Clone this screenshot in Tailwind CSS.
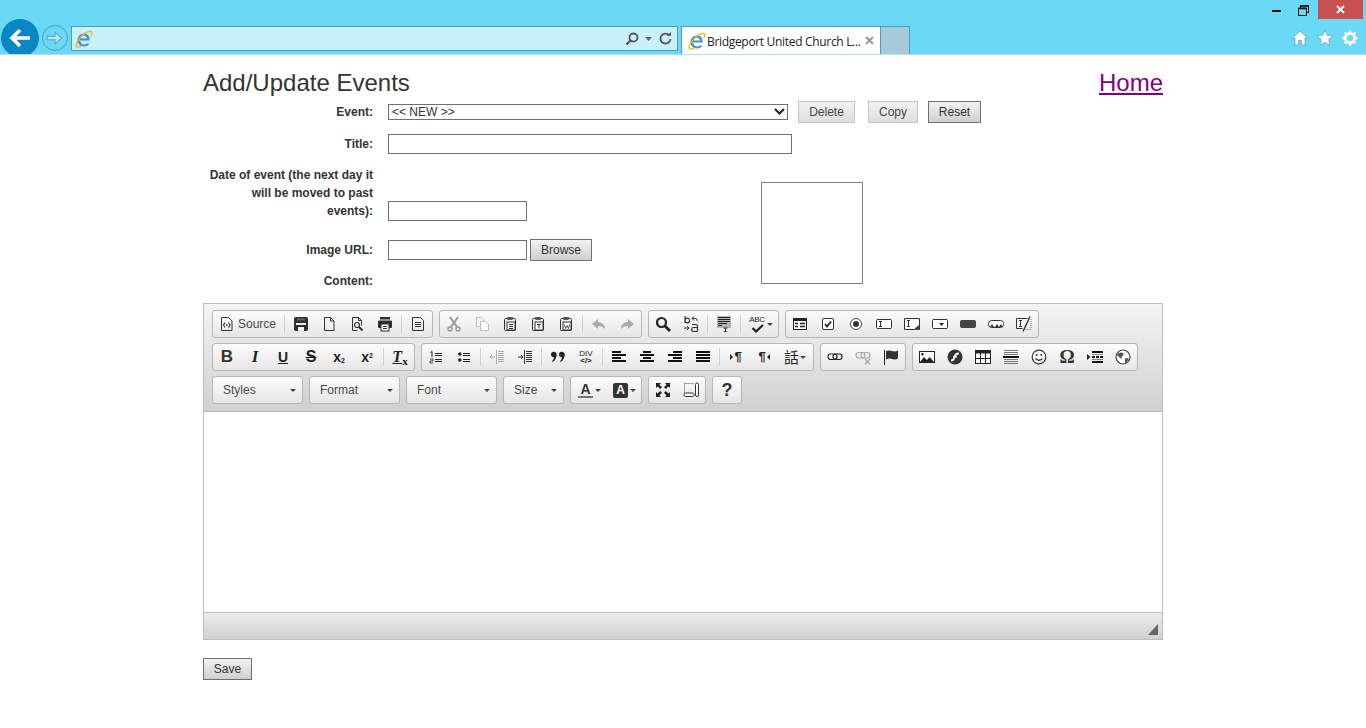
<!DOCTYPE html>
<html lang="en">
<head>
    <meta charset="UTF-8">
    <title>Add/Update Events</title>
    <script src="https://cdn.jsdelivr.net/npm/@tailwindcss/browser@4"></script>
</head>
<body class="bg-white font-['Liberation_Sans',Arial,sans-serif] text-[#333] overflow-hidden">

<!-- toolbar icons -->
<svg class="hidden" xmlns="http://www.w3.org/2000/svg">
    <symbol id="ie" viewBox="0 0 18 18">
        <path d="M3.500 10.500h11c.5-4-1.500-7-5.500-7s-6.500 3-6.500 6.500 2.500 6.500 6.500 6.500c2.500 0 4.500-1 5.500-3h-3c-.6.8-1.500 1-2.500 1-2 0-3.300-1.500-3.500-3zM6 8.500c.3-1.700 1.400-2.700 3-2.700s2.700 1 3 2.700z" fill="#3d8fd8" fill-rule="evenodd"/>
        <path d="M1.500 16.500C-.5 13 8 3 14 1.500c3.500-.8 3.500 2 2 4.500M1.500 16.500c1 1 3 .7 5-.5" fill="none" stroke="#f2b515" stroke-width="1.300"/>
    </symbol>
    <symbol id="page" viewBox="0 0 16 16"><path d="M3.500 1.500h6l3.500 3.500v9.500H3.500zM9.500 1.500V5H13" fill="none" stroke="#333"/></symbol>
    <symbol id="source" viewBox="0 0 16 16"><path d="M2.500 1.500h7l3.500 3.500v9.500H2.500z" fill="none" stroke="#333"/><path d="M6 6.500L4.500 9 6 11.500M9.500 6.500L11 9l-1.500 2.500" fill="none" stroke="#333" stroke-width="1.100"/><rect x="7" y="8.300" width="1.500" height="1.500" fill="#333"/></symbol>
    <symbol id="save" viewBox="0 0 16 16"><path d="M1 3a2 2 0 0 1 2-2h10a2 2 0 0 1 2 2v10a2 2 0 0 1-2 2H3a2 2 0 0 1-2-2z" fill="#2e2e2e"/><rect x="3" y="7" width="10" height="2" fill="#eee"/><rect x="4" y="2.500" width="8" height="2" fill="#666"/><rect x="5" y="11" width="6" height="4" fill="#eee"/></symbol>
    <symbol id="preview" viewBox="0 0 16 16"><path d="M3.500 14.500v-13h6l3 3v5M3.500 14.500h5M9.500 1.500v3h3" fill="none" stroke="#333"/><circle cx="8" cy="9" r="2.500" fill="none" stroke="#333" stroke-width="1.200"/><path d="M10 11l3.500 3.500" stroke="#333" stroke-width="2"/></symbol>
    <symbol id="print" viewBox="0 0 16 16"><rect x="3" y="1" width="10" height="2.500" fill="#2e2e2e"/><rect x="1" y="4.500" width="14" height="7.500" rx="1" fill="#2e2e2e"/><rect x="4" y="8" width="8" height="7" fill="#fff" stroke="#2e2e2e"/><path d="M6 10.500h4M6 12.500h4" stroke="#2e2e2e"/></symbol>
    <symbol id="templates" viewBox="0 0 16 16"><path d="M2.500 1.500h8l3 3v10h-11z" fill="none" stroke="#333"/><path d="M5 6.500h6M5 8.500h6M5 10.500h6" stroke="#333"/></symbol>
    <symbol id="cut" viewBox="0 0 16 16"><circle cx="4" cy="13" r="2" fill="none" stroke="#999" stroke-width="1.500"/><circle cx="12" cy="13" r="2" fill="none" stroke="#999" stroke-width="1.500"/><path d="M5 11L12 1M11 11L4 1" stroke="#999" stroke-width="2"/></symbol>
    <symbol id="copy" viewBox="0 0 16 16"><path d="M2.500 1.500h5l2 2v2M2.500 1.500v9h3M6.500 5.500h5l3 3v6h-8z" fill="#fff" stroke="#bbb"/></symbol>
    <symbol id="paste" viewBox="0 0 16 16"><path d="M5 2.500H3.500q-1 0-1 1v10q0 1 1 1h9q1 0 1-1v-10q0-1-1-1H11" fill="none" stroke="#333"/><rect x="5" y="1" width="6" height="3" rx="1" fill="#555"/><rect x="5" y="6" width="8" height="8" fill="#fff" stroke="#333"/><path d="M7 8.500h4M7 10.500h4M7 12.500h4" stroke="#333"/></symbol>
    <symbol id="pastet" viewBox="0 0 16 16"><path d="M5 2.500H3.500q-1 0-1 1v10q0 1 1 1h9q1 0 1-1v-10q0-1-1-1H11" fill="none" stroke="#333"/><rect x="5" y="1" width="6" height="3" rx="1" fill="#555"/><rect x="5" y="6" width="8" height="8" fill="#fff" stroke="#333"/><path d="M7 8.500h4M9 8.500v4" stroke="#333"/></symbol>
    <symbol id="pastew" viewBox="0 0 16 16"><path d="M5 2.500H3.500q-1 0-1 1v10q0 1 1 1h9q1 0 1-1v-10q0-1-1-1H11" fill="none" stroke="#333"/><rect x="5" y="1" width="6" height="3" rx="1" fill="#555"/><rect x="5" y="6" width="8" height="8" fill="#fff" stroke="#333"/><path d="M6.500 8.500l1 4 1.500-3 1.500 3 1-4" fill="none" stroke="#333" stroke-width=".8"/></symbol>
    <symbol id="undo" viewBox="0 0 16 16"><path d="M7 3L1 8l6 5v-3c3 0 5 1 7 3 0-4-3-7-7-7z" fill="#aaa"/></symbol>
    <symbol id="redo" viewBox="0 0 16 16"><path d="M9 3l6 5-6 5v-3c-3 0-5 1-7 3 0-4 3-7 7-7z" fill="#aaa"/></symbol>
    <symbol id="find" viewBox="0 0 16 16"><circle cx="6.500" cy="6.500" r="4.500" fill="none" stroke="#222" stroke-width="2.200"/><path d="M10 10l5 5" stroke="#222" stroke-width="3"/></symbol>
    <symbol id="replace" viewBox="0 0 16 16"><path d="M2 0v7M2 4.500a2.300 2.300 0 1 0 4.600 0 2.300 2.300 0 1 0-4.600 0" fill="none" stroke="#333" stroke-width="1.200"/><path d="M9 2.500h3.500q1.500 0 1.500 1.500v1M9 2.500l2-2M9 2.500l2 2M1 12h5M6 12l-2-2M6 12l-2 2" fill="none" stroke="#333"/><path d="M9 8.500h4q1.500 0 1.500 1.500v5.500M14.500 11.500H10.500q-1.800 0-1.800 2t1.800 2h4" fill="none" stroke="#333" stroke-width="1.200"/></symbol>
    <symbol id="selectall" viewBox="0 0 16 16"><rect x="1" y="0" width="14" height="12" fill="#b5b5b5"/><path d="M2 1.500h12M2 3.500h12M2 5.500h12M2 7.500h9M2 9.500h4" stroke="#222"/><path d="M7.500 12h4M9.500 12v4M7.500 16h4" stroke="#222"/></symbol>
    <symbol id="form" viewBox="0 0 16 16"><rect x="1.500" y="2.500" width="13" height="11" fill="#fff" stroke="#222"/><rect x="1" y="2" width="14" height="3" fill="#222"/><path d="M3 7.500h3M3 10.500h3M8 7.500h5M8 10.500h5" stroke="#222" stroke-width="1.500"/></symbol>
    <symbol id="checkbox" viewBox="0 0 16 16"><rect x="2.500" y="2.500" width="11" height="11" rx="1.500" fill="#fff" stroke="#333"/><path d="M5 8l2 2.500L11 5.500" fill="none" stroke="#222" stroke-width="1.800"/></symbol>
    <symbol id="radio" viewBox="0 0 16 16"><circle cx="8" cy="8" r="5.500" fill="#fff" stroke="#444"/><circle cx="8" cy="8" r="3" fill="#333"/></symbol>
    <symbol id="textfield" viewBox="0 0 16 16"><rect x=".5" y="3.500" width="15" height="9" rx="1" fill="#fff" stroke="#333"/><path d="M3 5.500h3M4.500 5.500v5M3 10.500h3" stroke="#333"/></symbol>
    <symbol id="textarea" viewBox="0 0 16 16"><path d="M.5 2.500h15v11H.5z" fill="#fff" stroke="#333"/><path d="M3 4.500h3M4.500 4.500v6M3 10.500h3" stroke="#333"/><path d="M15 9l-6 5h6z" fill="#444"/></symbol>
    <symbol id="selectbox" viewBox="0 0 16 16"><rect x=".5" y="3.500" width="15" height="9" rx="1" fill="#fff" stroke="#333"/><path d="M7 7h5l-2.500 3z" fill="#222"/></symbol>
    <symbol id="button" viewBox="0 0 16 16"><rect x="0" y="4" width="16" height="8" rx="2" fill="#444"/></symbol>
    <symbol id="imagebutton" viewBox="0 0 16 16"><rect x=".5" y="4.500" width="15" height="7" rx="3" fill="#fff" stroke="#333"/><path d="M2 11l2-3 2 3zM7 11l2-3 2 3zM11 11l2-3 1.500 3z" fill="#333"/></symbol>
    <symbol id="hidden" viewBox="0 0 16 16"><path d="M.5 2.500h11M.5 2.500v10h6" fill="none" stroke="#333"/><path d="M3 4.500h3M4.500 4.500v6M3 10.500h3" stroke="#333"/><path d="M7 15.500L14 .5" stroke="#333" stroke-width="1.400"/><path d="M15 3v10.500H9" fill="none" stroke="#777" stroke-dasharray="1 1"/></symbol>
    <symbol id="ol" viewBox="0 0 16 16"><path d="M7 4.500h7M7 6.500h7M7 10.500h7M7 12.500h7" stroke="#222"/><path d="M2.500 3.500l1.500-1V8" fill="none" stroke="#222"/><path d="M2 10h3v2H2v2h3" fill="none" stroke="#222" stroke-width=".8"/></symbol>
    <symbol id="ul" viewBox="0 0 16 16"><circle cx="3.800" cy="5" r="1.800" fill="#222"/><circle cx="3.800" cy="11" r="1.800" fill="#222"/><path d="M7 4.500h7M7 6.500h7M7 10.500h7M7 12.500h7" stroke="#222"/></symbol>
    <symbol id="outdent" viewBox="0 0 16 16"><path d="M9 2.500h6M9 4.500h6M9 6.500h6M9 8.500h6M9 10.500h6M9 12.500h6M7.500 1v14" stroke="#aaa"/><path d="M6 8H1M3 6L1 8l2 2" fill="none" stroke="#aaa"/></symbol>
    <symbol id="indent" viewBox="0 0 16 16"><path d="M9 2.500h6M9 4.500h6M9 6.500h6M9 8.500h6M9 10.500h6M9 12.500h6M7.500 1v14" stroke="#333"/><path d="M1 8h5M4 6l2 2-2 2" fill="none" stroke="#333"/></symbol>
    <symbol id="quote" viewBox="0 0 16 16"><circle cx="3.800" cy="5.500" r="2.800" fill="#222"/><path d="M6.600 5.500C6.600 9 5 11.500 2.500 13l-.5-1C3.200 11 4 9.500 4 8z" fill="#222"/><circle cx="11.800" cy="5.500" r="2.800" fill="#222"/><path d="M14.600 5.500c0 3.500-1.600 6-4.100 7.500l-.5-1c1.200-1 2-2.500 2-4z" fill="#222"/></symbol>
    <symbol id="left" viewBox="0 0 16 16"><path d="M1 3h9M1 6h14M1 9h9M1 12h14" stroke="#111" stroke-width="2"/></symbol>
    <symbol id="center" viewBox="0 0 16 16"><path d="M4 3h8M1 6h14M4 9h8M1 12h14" stroke="#111" stroke-width="2"/></symbol>
    <symbol id="right" viewBox="0 0 16 16"><path d="M6 3h9M1 6h14M6 9h9M1 12h14" stroke="#111" stroke-width="2"/></symbol>
    <symbol id="justify" viewBox="0 0 16 16"><path d="M1 3h14M1 6h14M1 9h14M1 12h14" stroke="#111" stroke-width="2"/></symbol>
    <symbol id="link" viewBox="0 0 16 16"><rect x="1" y="5" width="9" height="5.500" rx="2.700" fill="none" stroke="#222" stroke-width="1.200"/><rect x="6" y="5" width="9" height="5.500" rx="2.700" fill="none" stroke="#222" stroke-width="1.200"/></symbol>
    <symbol id="unlink" viewBox="0 0 16 16"><rect x="1" y="3.500" width="9" height="5.500" rx="2.700" fill="none" stroke="#aaa" stroke-width="1.200"/><rect x="6" y="3.500" width="9" height="5.500" rx="2.700" fill="none" stroke="#aaa" stroke-width="1.200"/><path d="M10 10l5 5M15 10l-5 5" stroke="#aaa" stroke-width="1.500"/></symbol>
    <symbol id="flag" viewBox="0 0 16 16"><path d="M1.500 1v15" stroke="#222"/><path d="M3 2q3-1 6 0t6-.5v8q-3 1.500-6 .5t-6 .5z" fill="#333"/></symbol>
    <symbol id="image" viewBox="0 0 16 16"><rect x=".5" y="2.500" width="15" height="11" fill="#fff" stroke="#222"/><path d="M1 13l4-5 3 3 2.500-3 4.500 5z" fill="#222"/><circle cx="3.500" cy="5.200" r="1.200" fill="#222"/></symbol>
    <symbol id="flash" viewBox="0 0 16 16"><circle cx="8" cy="8" r="7.500" fill="#333"/><path d="M12 4.500c-3 0-4 1-4.500 3.500S6 11.500 4 11.500" fill="none" stroke="#fff" stroke-width="1.800"/><path d="M6 7.800h4" stroke="#fff" stroke-width="1.500"/></symbol>
    <symbol id="table" viewBox="0 0 16 16"><rect x=".5" y="1.500" width="15" height="13" fill="#fff" stroke="#222"/><rect x="0" y="1" width="16" height="3.500" fill="#222"/><path d="M0 9.500h16M5.500 4v11M10.500 4v11" stroke="#222"/></symbol>
    <symbol id="hr" viewBox="0 0 16 16"><path d="M1 1.500h14M1 3.500h14M1 5.500h14M1 10.500h14M1 12.500h14M1 14.500h14" stroke="#777"/><path d="M0 8h16" stroke="#111" stroke-width="2"/></symbol>
    <symbol id="smiley" viewBox="0 0 16 16"><circle cx="8" cy="8" r="6.800" fill="#fff" stroke="#333" stroke-width="1.200"/><circle cx="5.700" cy="6" r="1" fill="#333"/><circle cx="10.300" cy="6" r="1" fill="#333"/><path d="M4.500 9.500q3.500 3.500 7 0" fill="none" stroke="#333" stroke-width="1.200"/></symbol>
    <symbol id="pagebreak" viewBox="0 0 16 16"><path d="M0 5l3.500 3L0 11z" fill="#222"/><path d="M5 3h11M5 13h11" stroke="#111" stroke-width="2"/><path d="M5 8h11" stroke="#111" stroke-width="2" stroke-dasharray="3 1"/><path d="M5 5.500h11M5 10.500h11" stroke="#888"/></symbol>
    <symbol id="iframe" viewBox="0 0 16 16"><circle cx="8" cy="8" r="7" fill="#fff" stroke="#444" stroke-width="1.200"/><path d="M3.500 4q3-1 4.500 0t-.5 3-1 3-2.500-2-1-3zM10 9.500q3-1 3.500 0t-2 3.500-1.500-1.500z" fill="#555"/></symbol>
    <symbol id="maximize" viewBox="0 0 16 16"><path d="M1 1h5L4.500 2.700 7 5.200 5.200 7 2.700 4.500 1 6zM15 1v5l-1.700-1.500L10.800 7 9 5.200l2.500-2.500L10 1zM1 15v-5l1.700 1.500L5.200 9 7 10.800l-2.500 2.500L6 15zM15 15h-5l1.500-1.700L9 10.800 10.800 9l2.500 2.500L15 10z" fill="#222"/></symbol>
    <symbol id="blocks" viewBox="0 0 16 16"><path d="M1.500 1.500h9M1.500 1.500v9" stroke="#555" stroke-dasharray="1 1" fill="none"/><rect x="1" y="11" width="10" height="3.500" rx="1.500" fill="#fff" stroke="#333"/><rect x="12.500" y="1" width="3" height="13.500" rx="1.500" fill="#fff" stroke="#333"/></symbol>
</svg>

<!-- barra del navegador -->
<header class="h-[55px] overflow-hidden bg-[#6bd8f6] border-b border-[#b6dfeb] flex flex-col">
    <div class="h-[20px] flex justify-end items-start pr-[3px]">
        <span class="w-[9px] h-[2px] mt-[10px] bg-[#111]"></span>
        <svg class="w-[11px] h-[11px] mt-[5px] ml-[17px]" viewBox="0 0 11 11"><path d="M2.500 2.500V.5h8v7h-2M.5 3h8v7.500h-8z" fill="none" stroke="#111"/><path d="M.5 3.500h8M2.500 1h8" stroke="#111" stroke-width="1.500"/></svg>
        <span class="w-[45px] h-[19px] ml-[9px] bg-[#c75050] flex items-center justify-center">
            <svg class="w-[9px] h-[9px]" viewBox="0 0 9 9"><path d="M1 1l7 7M8 1L1 8" stroke="#fff" stroke-width="1.800"/></svg>
        </span>
    </div>
    <div class="h-[35px] flex items-start">
        <span class="w-[38px] h-[38px] shrink-0 ml-[1px] rounded-full bg-[#0a85c5] flex items-center justify-center">
            <svg class="w-[24px] h-[24px]" viewBox="0 0 24 24"><path d="M22 12H5M12 4l-8 8 8 8" fill="none" stroke="#fff" stroke-width="3.600"/></svg>
        </span>
        <span class="w-[26px] h-[26px] shrink-0 mt-[6px] ml-[3px] rounded-full border border-[#48a3bf] flex items-center justify-center">
            <svg class="w-[18px] h-[18px]" viewBox="0 0 16 16"><path d="M1 6.500h7V3l6 5-6 5V9.500H1z" fill="#b4e8f6" stroke="#62a9bd"/></svg>
        </span>
        <div class="w-[607px] h-[25px] shrink-0 mt-[7px] ml-[3px] bg-[#c9f1fb] border border-[#4a9fb8] flex items-center pl-[3px]">
            <svg class="w-[18px] h-[18px]"><use href="#ie"/></svg>
            <svg class="w-[14px] h-[14px] ml-auto" viewBox="0 0 14 14"><circle cx="8.500" cy="5.500" r="4" fill="none" stroke="#555" stroke-width="1.800"/><path d="M5.500 8.500L1.500 12.500" stroke="#555" stroke-width="2.200"/></svg>
            <svg class="w-[7px] h-[4px] ml-[6px]" viewBox="0 0 7 4"><path d="M0 0h7L3.500 4z" fill="#666"/></svg>
            <svg class="w-[13px] h-[13px] ml-[7px] mr-[5px]" viewBox="0 0 13 13"><path d="M10.500 3.500A5 5 0 1 0 11.500 7" fill="none" stroke="#555" stroke-width="1.800"/><path d="M7.500 3.800h4.500V0z" fill="#555"/></svg>
        </div>
        <div class="w-[200px] h-[28px] shrink-0 mt-[7px] ml-[3px] bg-white border border-b-0 border-[#4a9fb8] flex items-center pl-[6px] text-[12px] text-[#222] font-['Open_Sans',sans-serif]">
            <svg class="w-[18px] h-[18px] shrink-0"><use href="#ie"/></svg>
            <span class="ml-[1px] pt-[2px] tracking-[-0.32px] whitespace-nowrap">Bridgeport United Church L...</span>
            <svg class="w-[9px] h-[9px] ml-auto mr-[6px] shrink-0" viewBox="0 0 9 9"><path d="M1 1l7 7M8 1L1 8" stroke="#999" stroke-width="2"/></svg>
        </div>
        <span class="w-[29px] h-[28px] shrink-0 mt-[7px] bg-[#a5cbd9] border border-l-0 border-b-0 border-[#4a9fb8]"></span>
        <div class="ml-auto mr-[8px] mt-[11px] flex items-center gap-[9px]">
            <svg class="w-[16px] h-[16px]" viewBox="0 0 16 16"><path d="M8 1L.5 8H3v7h3.500v-4.500h3V15H13V8h2.500z" fill="#fff" stroke="#4e8fa5" stroke-width=".6"/></svg>
            <svg class="w-[16px] h-[16px]" viewBox="0 0 16 16"><path d="M8 .5l2.300 5 5.200.6-3.900 3.500 1.100 5.400L8 12.300 3.300 15l1.100-5.400L.5 6.100l5.200-.6z" fill="#fff" stroke="#4e8fa5" stroke-width=".5"/></svg>
            <svg class="w-[16px] h-[16px]" viewBox="0 0 16 16"><circle cx="8" cy="8" r="4.600" fill="none" stroke="#fff" stroke-width="2.600"/><path d="M8 .5v3M8 12.500v3M.5 8h3M12.500 8h3M2.700 2.700l2 2M11.300 11.300l2 2M13.300 2.700l-2 2M4.700 11.300l-2 2" stroke="#fff" stroke-width="2.400"/></svg>
        </div>
    </div>
</header>

<main class="w-[960px] ml-[203px]">
    <div class="mt-[14px] h-[28px] flex justify-between items-center text-[24px] leading-[28px]">
        <h1>Add/Update Events</h1>
        <a href="#" class="text-[#800080] underline">Home</a>
    </div>

    <!-- Event -->
    <div class="mt-[4px] h-[22px] flex items-center text-[12px]">
        <label class="w-[170px] text-right font-bold">Event:</label>
        <div class="relative ml-[15px] mb-[1px] w-[400px] h-[16px]">
            <select class="block appearance-none w-full h-full border border-[#707070] bg-white pl-[3px] text-[12px] leading-[14px] text-[#333] rounded-none">
                <option>&lt;&lt; NEW &gt;&gt;</option>
            </select>
            <svg class="absolute right-[2px] top-[3px] w-[13px] h-[10px] pointer-events-none" viewBox="0 0 13 10"><path d="M2 2l4.500 4.500L11 2" fill="none" stroke="#222" stroke-width="2"/></svg>
        </div>
        <button class="ml-[10px] w-[57px] h-[22px] border border-[#c4c4c4] bg-linear-to-b from-[#f2f2f2] to-[#dedede] text-[12px] text-[#444]">Delete</button>
        <button class="ml-[13px] w-[50px] h-[22px] border border-[#c4c4c4] bg-linear-to-b from-[#f2f2f2] to-[#dedede] text-[12px] text-[#444]">Copy</button>
        <button class="ml-[10px] w-[53px] h-[22px] border border-[#707070] bg-linear-to-b from-[#f2f2f2] to-[#cfcfcf] text-[12px] text-[#333]">Reset</button>
    </div>

    <!-- Title -->
    <div class="mt-[11px] h-[20px] flex items-center text-[12px]">
        <label class="w-[170px] text-right font-bold">Title:</label>
        <input type="text" class="ml-[15px] w-[404px] h-[20px] border border-[#707070] bg-white">
    </div>

    <div class="mt-[11px] flex">
        <div class="w-[558px] text-[12px]">
            <div class="h-[56px] flex items-end">
                <label class="w-[170px] mb-[1px] text-right font-bold leading-[18px]">Date of event (the next day it will be moved to past events):</label>
                <input type="text" class="ml-[15px] w-[139px] h-[20px] border border-[#707070] bg-white">
            </div>
            <div class="mt-[18px] h-[22px] flex items-center">
                <label class="w-[170px] text-right font-bold">Image URL:</label>
                <input type="text" class="ml-[15px] w-[139px] h-[20px] border border-[#707070] bg-white">
                <button class="ml-[3px] w-[62px] h-[22px] border border-[#707070] bg-linear-to-b from-[#f2f2f2] to-[#cfcfcf] text-[12px] text-[#333]">Browse</button>
            </div>
            <div class="mt-[11px] h-[18px] flex items-center">
                <label class="w-[170px] text-right font-bold">Content:</label>
            </div>
        </div>
        <div class="mt-[17px] w-[102px] h-[102px] border border-[#808080]"></div>
    </div>

    <!-- editor -->
    <div class="mt-[13px] h-[337px] border border-[#bdbdbd] flex flex-col text-[12px] text-[#484848]">
        <div class="h-[108px] shrink-0 pl-[8px] pt-[6px] border-b border-[#b6b6b6] bg-linear-to-b from-[#f4f4f4] to-[#cfd1cf] flex flex-col gap-[5px]">
            <div class="flex gap-[6px]">
                <div class="flex items-center h-[28px] border border-[#b6b6b6] rounded-[3px] bg-linear-to-b from-[#fcfcfc] to-[#e6e6e6]">
                    <span class="w-[69px] flex items-center pl-[6px]"><svg class="w-4 h-4"><use href="#source"/></svg><span class="ml-[3px]">Source</span></span>
                    <span class="w-px h-[18px] mx-[2px] bg-[#d0d0d0]"></span>
                    <span class="w-[28px] flex justify-center"><svg class="w-4 h-4"><use href="#save"/></svg></span>
                    <span class="w-[28px] flex justify-center"><svg class="w-4 h-4"><use href="#page"/></svg></span>
                    <span class="w-[28px] flex justify-center"><svg class="w-4 h-4"><use href="#preview"/></svg></span>
                    <span class="w-[28px] flex justify-center"><svg class="w-4 h-4"><use href="#print"/></svg></span>
                    <span class="w-px h-[18px] mx-[2px] bg-[#d0d0d0]"></span>
                    <span class="w-[28px] flex justify-center"><svg class="w-4 h-4"><use href="#templates"/></svg></span>
                </div>
                <div class="flex items-center h-[28px] border border-[#b6b6b6] rounded-[3px] bg-linear-to-b from-[#fcfcfc] to-[#e6e6e6]">
                    <span class="w-[28px] flex justify-center"><svg class="w-4 h-4"><use href="#cut"/></svg></span>
                    <span class="w-[28px] flex justify-center"><svg class="w-4 h-4"><use href="#copy"/></svg></span>
                    <span class="w-[28px] flex justify-center"><svg class="w-4 h-4"><use href="#paste"/></svg></span>
                    <span class="w-[28px] flex justify-center"><svg class="w-4 h-4"><use href="#pastet"/></svg></span>
                    <span class="w-[28px] flex justify-center"><svg class="w-4 h-4"><use href="#pastew"/></svg></span>
                    <span class="w-px h-[18px] mx-[2px] bg-[#d0d0d0]"></span>
                    <span class="w-[28px] flex justify-center"><svg class="w-4 h-4"><use href="#undo"/></svg></span>
                    <span class="w-[28px] flex justify-center"><svg class="w-4 h-4"><use href="#redo"/></svg></span>
                </div>
                <div class="flex items-center h-[28px] border border-[#b6b6b6] rounded-[3px] bg-linear-to-b from-[#fcfcfc] to-[#e6e6e6]">
                    <span class="w-[28px] flex justify-center"><svg class="w-4 h-4"><use href="#find"/></svg></span>
                    <span class="w-[28px] flex justify-center"><svg class="w-4 h-4"><use href="#replace"/></svg></span>
                    <span class="w-px h-[18px] mx-[2px] bg-[#d0d0d0]"></span>
                    <span class="w-[28px] flex justify-center"><svg class="w-4 h-4"><use href="#selectall"/></svg></span>
                    <span class="w-px h-[18px] mx-[2px] bg-[#d0d0d0]"></span>
                    <span class="w-[35px] flex items-center pl-[6px] gap-[2px]">
                        <span class="w-[16px] flex flex-col items-center text-[#222]"><span class="text-[8px] leading-[8px] tracking-[-0.3px]">ABC</span><svg class="w-[13px] h-[9px]" viewBox="0 0 13 9"><path d="M1.500 4l3.500 3.500L12 1" fill="none" stroke="#222" stroke-width="2.200"/></svg></span>
                        <span class="w-0 h-0 border-x-[3px] border-x-transparent border-t-[3px] border-t-[#444]"></span>
                    </span>
                </div>
                <div class="flex items-center h-[28px] border border-[#b6b6b6] rounded-[3px] bg-linear-to-b from-[#fcfcfc] to-[#e6e6e6]">
                    <span class="w-[28px] flex justify-center"><svg class="w-4 h-4"><use href="#form"/></svg></span>
                    <span class="w-[28px] flex justify-center"><svg class="w-4 h-4"><use href="#checkbox"/></svg></span>
                    <span class="w-[28px] flex justify-center"><svg class="w-4 h-4"><use href="#radio"/></svg></span>
                    <span class="w-[28px] flex justify-center"><svg class="w-4 h-4"><use href="#textfield"/></svg></span>
                    <span class="w-[28px] flex justify-center"><svg class="w-4 h-4"><use href="#textarea"/></svg></span>
                    <span class="w-[28px] flex justify-center"><svg class="w-4 h-4"><use href="#selectbox"/></svg></span>
                    <span class="w-[28px] flex justify-center"><svg class="w-4 h-4"><use href="#button"/></svg></span>
                    <span class="w-[28px] flex justify-center"><svg class="w-4 h-4"><use href="#imagebutton"/></svg></span>
                    <span class="w-[28px] flex justify-center"><svg class="w-4 h-4"><use href="#hidden"/></svg></span>
                </div>
            </div>
            <div class="flex gap-[6px]">
                <div class="flex items-center h-[28px] border border-[#b6b6b6] rounded-[3px] bg-linear-to-b from-[#fcfcfc] to-[#e6e6e6] text-[#222]">
                    <span class="w-[28px] text-center font-bold text-[17px] text-[#333]">B</span>
                    <span class="w-[28px] text-center font-bold italic text-[17px] font-['Liberation_Serif',serif]">I</span>
                    <span class="w-[28px] text-center font-bold underline text-[14px]">U</span>
                    <span class="w-[28px] text-center font-bold line-through text-[16px]">S</span>
                    <span class="w-[28px] text-center font-bold text-[14px]">x<sub class="text-[7px]">2</sub></span>
                    <span class="w-[28px] text-center font-bold text-[14px]">x<sup class="text-[7px]">2</sup></span>
                    <span class="w-px h-[18px] mx-[2px] bg-[#d0d0d0]"></span>
                    <span class="w-[28px] text-center font-bold italic text-[16px] font-['Liberation_Serif',serif]"><span class="underline">T</span><sub class="text-[11px] not-italic">x</sub></span>
                </div>
                <div class="flex items-center h-[28px] border border-[#b6b6b6] rounded-[3px] bg-linear-to-b from-[#fcfcfc] to-[#e6e6e6]">
                    <span class="w-[28px] flex justify-center"><svg class="w-4 h-4"><use href="#ol"/></svg></span>
                    <span class="w-[28px] flex justify-center"><svg class="w-4 h-4"><use href="#ul"/></svg></span>
                    <span class="w-px h-[18px] mx-[2px] bg-[#d0d0d0]"></span>
                    <span class="w-[28px] flex justify-center"><svg class="w-4 h-4"><use href="#outdent"/></svg></span>
                    <span class="w-[28px] flex justify-center"><svg class="w-4 h-4"><use href="#indent"/></svg></span>
                    <span class="w-px h-[18px] mx-[2px] bg-[#d0d0d0]"></span>
                    <span class="w-[28px] flex justify-center"><svg class="w-4 h-4"><use href="#quote"/></svg></span>
                    <span class="w-[28px] flex flex-col items-center text-[#222]"><span class="text-[8px] leading-[7px]">DIV</span><span class="font-bold text-[8px] leading-[8px]">&lt;/&gt;</span></span>
                    <span class="w-px h-[18px] mx-[2px] bg-[#d0d0d0]"></span>
                    <span class="w-[28px] flex justify-center"><svg class="w-4 h-4"><use href="#left"/></svg></span>
                    <span class="w-[28px] flex justify-center"><svg class="w-4 h-4"><use href="#center"/></svg></span>
                    <span class="w-[28px] flex justify-center"><svg class="w-4 h-4"><use href="#right"/></svg></span>
                    <span class="w-[28px] flex justify-center"><svg class="w-4 h-4"><use href="#justify"/></svg></span>
                    <span class="w-px h-[18px] mx-[2px] bg-[#d0d0d0]"></span>
                    <span class="w-[28px] flex items-center justify-center gap-[1px] text-[13px] font-bold text-[#222]"><span class="w-0 h-0 border-y-[3px] border-y-transparent border-l-[3px] border-l-[#222]"></span>¶</span>
                    <span class="w-[28px] flex items-center justify-center gap-[1px] text-[13px] font-bold text-[#222]">¶<span class="w-0 h-0 border-y-[3px] border-y-transparent border-r-[3px] border-r-[#222]"></span></span>
                    <span class="w-[35px] flex items-center pl-[6px] gap-[1px] text-[15px] text-[#222] font-['Noto_Sans_CJK_TC','Noto_Sans_CJK_SC',sans-serif]">話<span class="w-0 h-0 border-x-[3px] border-x-transparent border-t-[3px] border-t-[#444]"></span></span>
                </div>
                <div class="flex items-center h-[28px] border border-[#b6b6b6] rounded-[3px] bg-linear-to-b from-[#fcfcfc] to-[#e6e6e6]">
                    <span class="w-[28px] flex justify-center"><svg class="w-4 h-4"><use href="#link"/></svg></span>
                    <span class="w-[28px] flex justify-center"><svg class="w-4 h-4"><use href="#unlink"/></svg></span>
                    <span class="w-[28px] flex justify-center"><svg class="w-4 h-4"><use href="#flag"/></svg></span>
                </div>
                <div class="flex items-center h-[28px] border border-[#b6b6b6] rounded-[3px] bg-linear-to-b from-[#fcfcfc] to-[#e6e6e6]">
                    <span class="w-[28px] flex justify-center"><svg class="w-4 h-4"><use href="#image"/></svg></span>
                    <span class="w-[28px] flex justify-center"><svg class="w-4 h-4"><use href="#flash"/></svg></span>
                    <span class="w-[28px] flex justify-center"><svg class="w-4 h-4"><use href="#table"/></svg></span>
                    <span class="w-[28px] flex justify-center"><svg class="w-4 h-4"><use href="#hr"/></svg></span>
                    <span class="w-[28px] flex justify-center"><svg class="w-4 h-4"><use href="#smiley"/></svg></span>
                    <span class="w-[28px] text-center font-bold text-[19px] text-[#333] font-['Liberation_Serif',serif]">Ω</span>
                    <span class="w-[28px] flex justify-center"><svg class="w-4 h-4"><use href="#pagebreak"/></svg></span>
                    <span class="w-[28px] flex justify-center"><svg class="w-4 h-4"><use href="#iframe"/></svg></span>
                </div>
            </div>
            <div class="flex gap-[6px]">
                <div class="w-[91px] h-[28px] flex items-center justify-between pl-[10px] pr-[6px] border border-[#b6b6b6] rounded-[3px] bg-linear-to-b from-[#fcfcfc] to-[#e6e6e6]">Styles<span class="w-0 h-0 border-x-[3px] border-x-transparent border-t-[3px] border-t-[#444]"></span></div>
                <div class="w-[91px] h-[28px] flex items-center justify-between pl-[10px] pr-[6px] border border-[#b6b6b6] rounded-[3px] bg-linear-to-b from-[#fcfcfc] to-[#e6e6e6]">Format<span class="w-0 h-0 border-x-[3px] border-x-transparent border-t-[3px] border-t-[#444]"></span></div>
                <div class="w-[91px] h-[28px] flex items-center justify-between pl-[10px] pr-[6px] border border-[#b6b6b6] rounded-[3px] bg-linear-to-b from-[#fcfcfc] to-[#e6e6e6]">Font<span class="w-0 h-0 border-x-[3px] border-x-transparent border-t-[3px] border-t-[#444]"></span></div>
                <div class="w-[61px] h-[28px] flex items-center justify-between pl-[10px] pr-[6px] border border-[#b6b6b6] rounded-[3px] bg-linear-to-b from-[#fcfcfc] to-[#e6e6e6]">Size<span class="w-0 h-0 border-x-[3px] border-x-transparent border-t-[3px] border-t-[#444]"></span></div>
                <div class="flex items-center h-[28px] border border-[#b6b6b6] rounded-[3px] bg-linear-to-b from-[#fcfcfc] to-[#e6e6e6]">
                    <span class="w-[35px] flex items-center pl-[7px] gap-[2px]">
                        <span class="w-[15px] text-center font-bold text-[14px] leading-[14px] text-[#333] border-b-2 border-[#777]">A</span>
                        <span class="w-0 h-0 border-x-[3px] border-x-transparent border-t-[3px] border-t-[#444]"></span>
                    </span>
                    <span class="w-[35px] flex items-center pl-[7px] gap-[2px]">
                        <span class="w-[15px] h-[15px] rounded-[2px] bg-[#333] text-center font-bold text-[12px] leading-[15px] text-white">A</span>
                        <span class="w-0 h-0 border-x-[3px] border-x-transparent border-t-[3px] border-t-[#444]"></span>
                    </span>
                </div>
                <div class="flex items-center h-[28px] border border-[#b6b6b6] rounded-[3px] bg-linear-to-b from-[#fcfcfc] to-[#e6e6e6]">
                    <span class="w-[28px] flex justify-center"><svg class="w-4 h-4"><use href="#maximize"/></svg></span>
                    <span class="w-[28px] flex justify-center"><svg class="w-4 h-4"><use href="#blocks"/></svg></span>
                </div>
                <div class="flex items-center h-[28px] border border-[#b6b6b6] rounded-[3px] bg-linear-to-b from-[#fcfcfc] to-[#e6e6e6]">
                    <span class="w-[28px] text-center font-bold text-[18px] text-[#333]">?</span>
                </div>
            </div>
        </div>
        <div class="flex-1 bg-white"></div>
        <div class="h-[27px] shrink-0 border-t border-[#bfbfbf] bg-linear-to-b from-[#ebebeb] to-[#cfd1cf] flex justify-end items-end pr-[4px] pb-[4px]">
            <svg class="w-[10px] h-[11px]" viewBox="0 0 10 11"><path d="M10 0v11H0z" fill="#666"/></svg>
        </div>
    </div>

    <button class="mt-[18px] w-[49px] h-[22px] border border-[#707070] bg-linear-to-b from-[#f2f2f2] to-[#cfcfcf] text-[12px] text-[#333]">Save</button>
</main>

</body>
</html>
